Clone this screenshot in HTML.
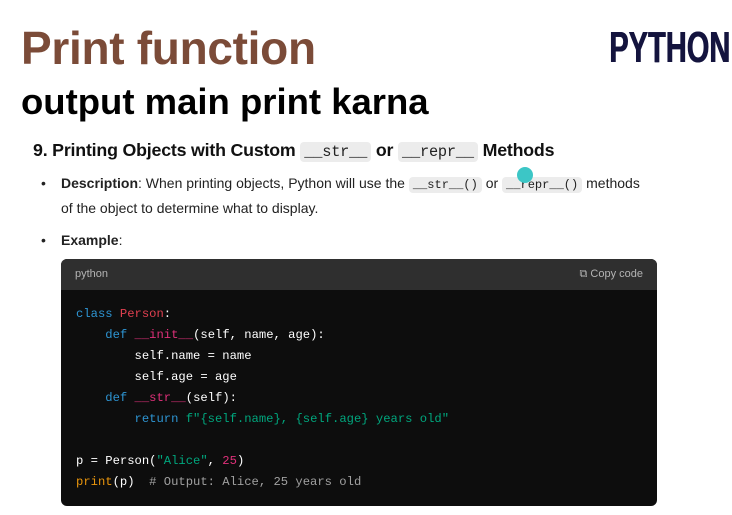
<!DOCTYPE html>
<html><head><meta charset="utf-8"><style>
body{margin:0;width:732px;height:515px;background:#fff;position:relative;overflow:hidden;font-family:"Liberation Sans",sans-serif}
.a{position:absolute;white-space:nowrap}
.ic{font-family:"Liberation Mono",monospace;background:#ececec;border-radius:4px;padding:1px 4px;font-size:0.86em;color:#222}
.code{position:absolute;left:61px;top:259px;width:596px;height:247px;background:#0d0d0d;border-radius:6px;overflow:hidden}
.hd{height:31px;background:#2f2f2f;color:#b4b4b4;font-size:11px;line-height:31px;padding:0 14px;display:flex;justify-content:space-between}
pre{margin:0;position:absolute;left:15px;top:45px;font-family:"Liberation Mono",monospace;font-size:12.2px;line-height:21px;color:#fff}
.k{color:#2e95d3}.c{color:#df3079}.s{color:#00a67d}.f{color:#e9950c}.cm{color:#a0a0a0}.r{color:#e04050}
</style></head><body>
<div class="a" style="left:21px;top:21px;font-size:46px;color:#7b4b38;font-weight:bold;letter-spacing:-0.3px">Print function</div>
<div class="a" style="left:609px;top:23px;font-size:44px;font-weight:bold;color:#14143e;transform:scaleX(0.66);transform-origin:left;text-shadow:1px 0 0 #14143e">PYTHON</div>
<div class="a" style="left:21px;top:81px;font-size:36.5px;font-weight:bold;color:#000">output main print karna</div>
<div class="a" style="left:33px;top:140px;font-size:17.8px;font-weight:bold;color:#111;letter-spacing:-0.2px">9. Printing Objects with Custom <span class="ic" style="font-weight:normal">__str__</span> or <span class="ic" style="font-weight:normal">__repr__</span> Methods</div>
<div class="a" style="left:41px;top:175px;font-size:14px;color:#222">•</div>
<div class="a" style="left:61px;top:175px;font-size:14px;color:#222"><b>Description</b>: When printing objects, Python will use the <span class="ic">__str__()</span> or <span class="ic">__repr__()</span> methods</div>
<div class="a" style="left:61px;top:200px;font-size:14px;color:#222">of the object to determine what to display.</div>
<div class="a" style="left:41px;top:232px;font-size:14px;color:#222">•</div>
<div class="a" style="left:61px;top:232px;font-size:14px;color:#222"><b>Example</b>:</div>
<div class="a" style="left:517px;top:167px;width:16px;height:16px;border-radius:50%;background:#3cc6c6"></div>
<div class="code"><div class="hd"><span>python</span><span>⧉ Copy code</span></div>
<pre><span class="k">class</span> <span class="r">Person</span>:
    <span class="k">def</span> <span class="c">__init__</span>(self, name, age):
        self.name = name
        self.age = age
    <span class="k">def</span> <span class="c">__str__</span>(self):
        <span class="k">return</span> <span class="s">f"{self.name}, {self.age} years old"</span>

p = Person(<span class="s">"Alice"</span>, <span class="c">25</span>)
<span class="f">print</span>(p)  <span class="cm"># Output: Alice, 25 years old</span></pre></div>
</body></html>
